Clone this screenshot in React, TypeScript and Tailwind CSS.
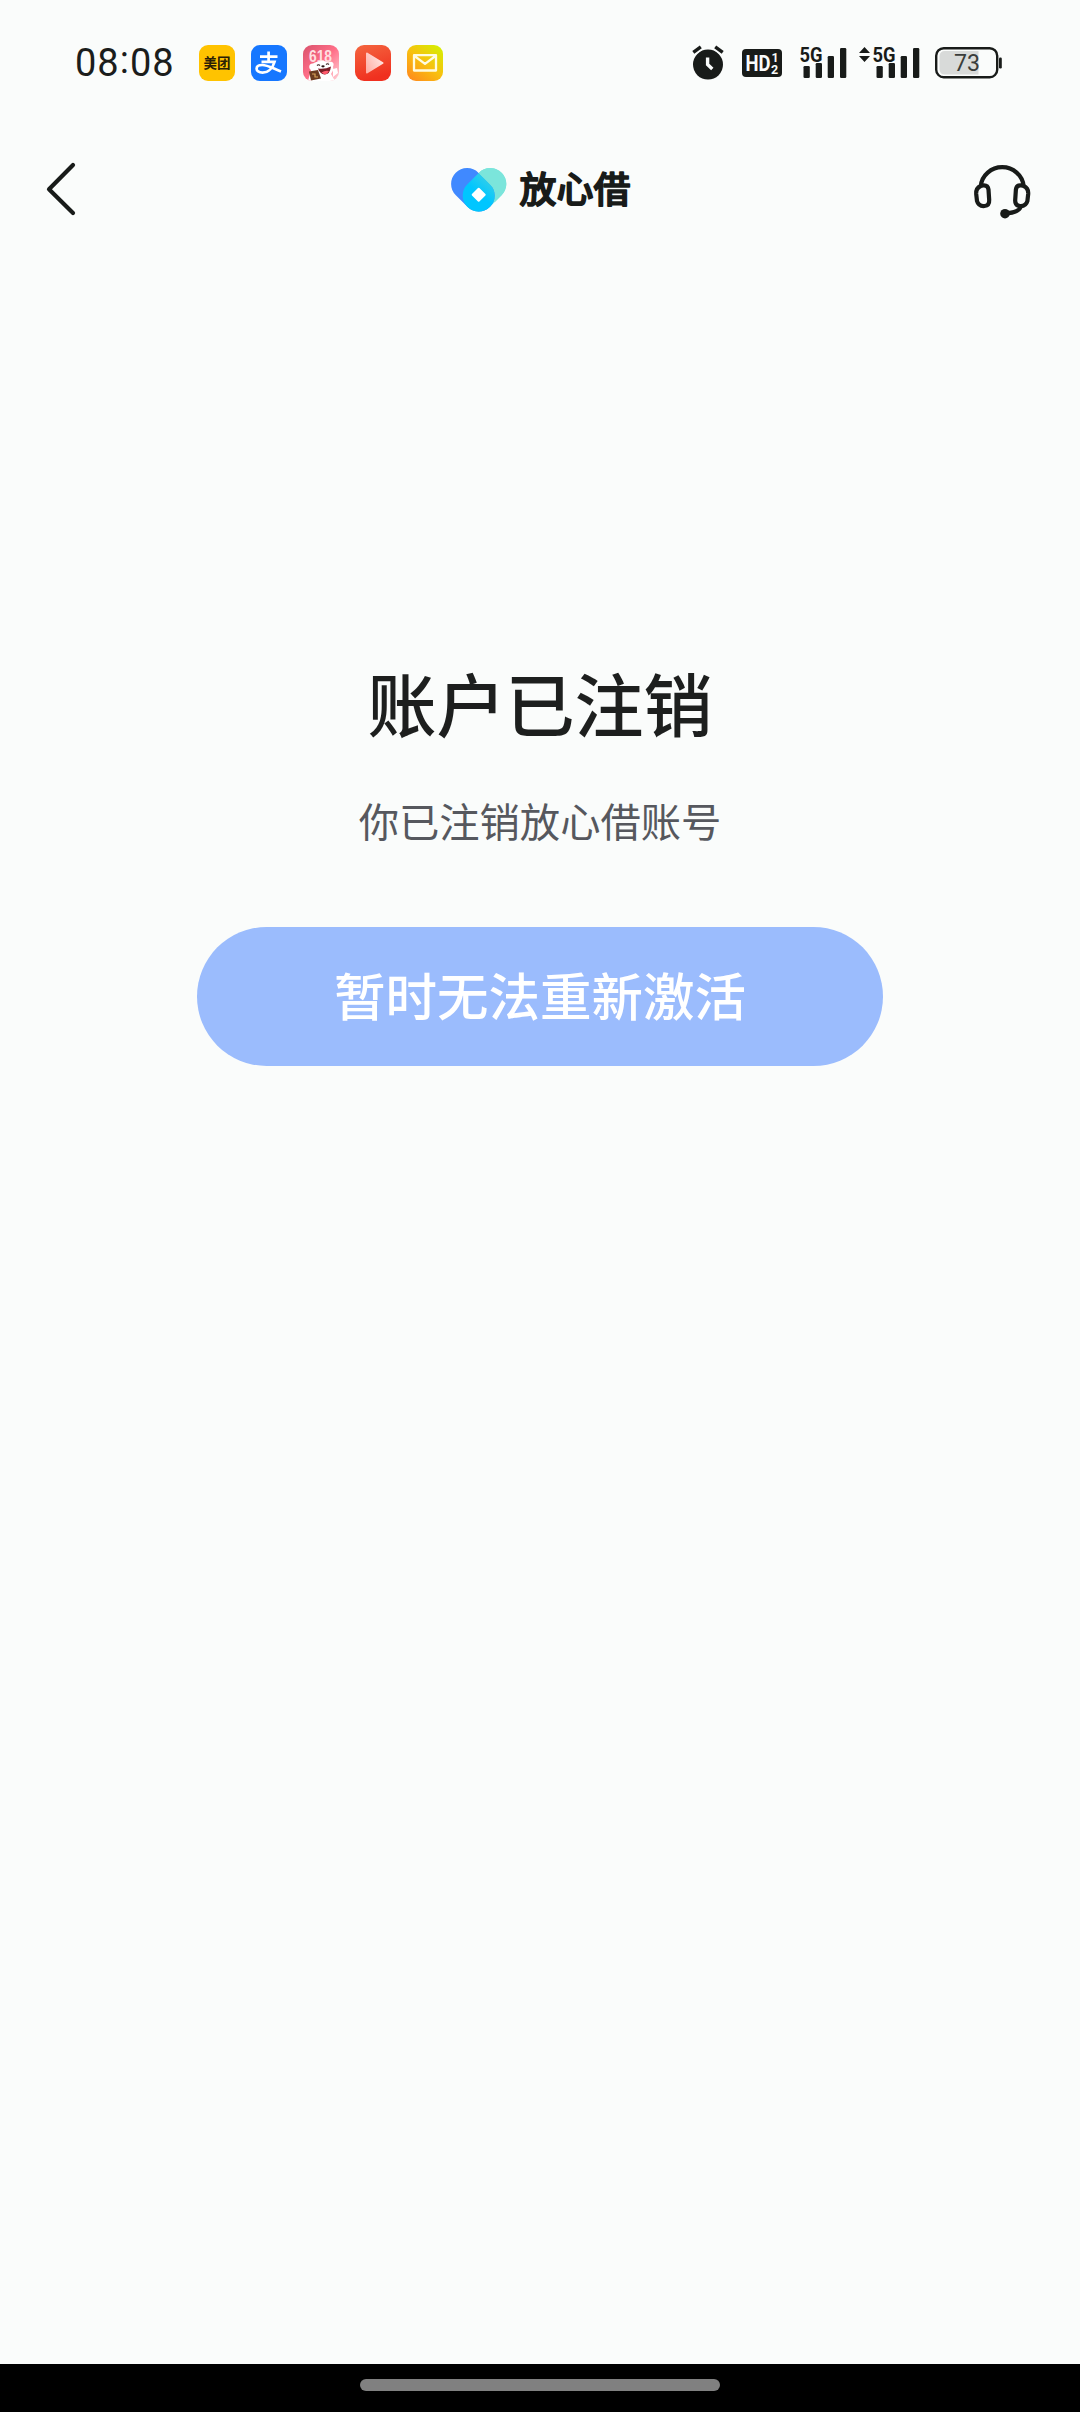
import React from "react";

const CJK = "font-['Noto_Sans_CJK_SC',sans-serif]";

function MeituanIcon() {
  return (
    <div className="flex size-9 items-center justify-center rounded-[9px] bg-[#ffc300]">
      <span className={`${CJK} text-[13.5px] leading-none font-bold text-[#2a2005]`}>美团</span>
    </div>
  );
}

function AlipayIcon() {
  return (
    <svg className="size-9" viewBox="0 0 36 36" fill="none">
      <rect width="36" height="36" rx="9" fill="#1677ff" />
      <path d="M9 11.6H26.5M17.6 6.5V16.5M10.5 16.8H23.5C22 22 18 27.6 11.5 27.6C7.8 27.6 5.6 25.9 5.6 23.7C5.6 21.4 8 20 11.2 20C16.5 20 22 23.5 30 26.5" stroke="#fff" strokeWidth="2.7" />
    </svg>
  );
}

function SaleIcon() {
  return (
    <svg className="size-9" viewBox="0 0 36 36">
      <defs>
        <linearGradient id="sale" x1="0" y1="0" x2="1" y2="1">
          <stop offset="0" stopColor="#d9526c" />
          <stop offset=".5" stopColor="#ff6f88" />
          <stop offset="1" stopColor="#ffd3d8" />
        </linearGradient>
        <clipPath id="saleClip"><rect width="36" height="36" rx="9" /></clipPath>
      </defs>
      <g clipPath="url(#saleClip)">
        <rect width="36" height="36" fill="url(#sale)" />
        <text x="6" y="16.500" textLength="23" lengthAdjust="spacingAndGlyphs" fontFamily="Liberation Sans" fontWeight="700" fontSize="16.500" fill="#ffdfe0">618</text>
        <path d="M5 36L8 25C5 23 6 18 10 18.500C14 16 21 15 25 17.500C29 15.500 32 18 30 22C31 25 29 27 28 29L32 36Z" fill="#fff" />
        <path d="M30 24l4-1 1 5-5 4z" fill="#fff" />
        <path d="M15 23.500Q22 24.500 28 21.500Q27 29.500 21.500 29.500Q17 29 15 23.500Z" fill="#7b1d26" />
        <path d="M18.500 27.500Q22 25 26 26Q24 29.500 21.500 29.500Z" fill="#ff5a6c" />
        <path d="M14 20.500q1.500-1.500 3 0M23 19.500q1.500-1.500 3 0" stroke="#3b1a1a" strokeWidth="1.100" fill="none" />
        <ellipse cx="20" cy="21.300" rx="1.700" ry="1.100" fill="#2b1414" />
        <path d="M6 26.500L15 25L18 33.500L8 35.500Z" fill="#6b3b20" />
        <path d="M9 29h3v3h3" stroke="#d9a55b" strokeWidth="1.200" fill="none" />
      </g>
    </svg>
  );
}

function VideoIcon() {
  return (
    <svg className="size-9" viewBox="0 0 36 36">
      <defs>
        <linearGradient id="video" x1="0" y1="0" x2="0.300" y2="1">
          <stop offset="0" stopColor="#f4663f" />
          <stop offset="1" stopColor="#f0301f" />
        </linearGradient>
        <linearGradient id="tri" x1="0" y1="1" x2="1" y2="0.300">
          <stop offset="0" stopColor="#ffaea4" />
          <stop offset="1" stopColor="#ffe4e0" />
        </linearGradient>
      </defs>
      <rect width="36" height="36" rx="9" fill="url(#video)" />
      <path d="M12 8.500L27.500 18L12 27.500Z" fill="url(#tri)" stroke="url(#tri)" strokeWidth="2" strokeLinejoin="round" />
    </svg>
  );
}

function MailIcon() {
  return (
    <svg className="size-9" viewBox="0 0 36 36" fill="none">
      <defs>
        <linearGradient id="mail" x1="0.100" y1="1" x2="0.900" y2="0">
          <stop offset="0" stopColor="#ff8a1c" />
          <stop offset=".5" stopColor="#f8c010" />
          <stop offset="1" stopColor="#d4f000" />
        </linearGradient>
      </defs>
      <rect width="36" height="36" rx="9" fill="url(#mail)" />
      <path d="M7 10.200H29V25.500H7ZM7.500 11L18 18.800L28.500 11" stroke="#fffbe0" strokeWidth="2.300" strokeLinejoin="round" />
    </svg>
  );
}

function AlarmIcon() {
  return (
    <svg className="h-9 w-8" viewBox="0 0 32 36" fill="none">
      <circle cx="16" cy="19.600" r="15" fill="#181b19" />
      <path d="M1.300 7L8.500 1.800M30.700 7L23.500 1.800" stroke="#fafcfb" strokeWidth="7" />
      <path d="M1.300 7.400L8.800 1.900M30.700 7.400L23.200 1.900" stroke="#181b19" strokeWidth="3.400" />
      <path d="M15.600 12.500V19.500L20.300 24" stroke="#fafcfb" strokeWidth="3.400" />
    </svg>
  );
}

function HdIcon() {
  return (
    <svg className="h-7 w-10" viewBox="0 0 40 28">
      <rect width="40" height="28" rx="4" fill="#181b19" />
      <g fontFamily="Roboto" fontWeight="700" fill="#fafcfb">
        <text x="3.500" y="22" fontSize="22" textLength="25" lengthAdjust="spacingAndGlyphs">HD</text>
        <text x="29.500" y="13" fontSize="12.500">1</text>
        <text x="29" y="25" fontSize="12.500">2</text>
      </g>
    </svg>
  );
}

function SignalIcon() {
  return (
    <svg className="-mt-2 h-10 w-12" viewBox="0 -8 48 40" fill="#181b19">
      <text x="-0.500" y="14.500" fontFamily="Roboto" fontWeight="700" fontSize="20.500" textLength="23" lengthAdjust="spacingAndGlyphs">5G</text>
      <rect x="3.500" y="19" width="6.300" height="12" rx="1.300" />
      <rect x="15.700" y="16" width="6.300" height="15" rx="1.300" />
      <rect x="27.700" y="9" width="6.300" height="22" rx="1.300" />
      <rect x="40" y="1" width="6.300" height="30" rx="1.300" />
    </svg>
  );
}

function BatteryIcon() {
  return (
    <svg className="h-8 w-[68px]" viewBox="0 0 68 32" fill="none">
      <path d="M10 4H43.500V27.500H10Q4.500 27.500 4.500 22V9.500Q4.500 4 10 4Z" fill="#d8dad9" />
      <rect x="1.200" y="1.200" width="61" height="29" rx="7.500" stroke="#181b19" strokeWidth="2.400" />
      <rect x="64" y="10.500" width="2.800" height="11" rx="1.200" fill="#181b19" />
      <text x="19" y="24.300" fontFamily="Roboto" fontSize="24" textLength="26" lengthAdjust="spacingAndGlyphs" fill="#3a3d3b">73</text>
    </svg>
  );
}

function StatusBar() {
  return (
    <div className="flex h-[125px] items-center pl-[75px] pr-[77px]">
      <span className="w-[124px] font-['Roboto',sans-serif] text-[38px] leading-none tracking-[1px] text-[#1b1d1c]">
        08<span className="relative -top-[3px]">:</span>08
      </span>
      <div className="flex gap-4">
        <MeituanIcon />
        <AlipayIcon />
        <SaleIcon />
        <VideoIcon />
        <MailIcon />
      </div>
      <div className="ml-auto flex items-center">
        <AlarmIcon />
        <div className="ml-[18px] flex"><HdIcon /></div>
        <div className="ml-[18px] flex"><SignalIcon /></div>
        <svg className="mr-[3px] ml-[11px] h-8 w-[11px]" viewBox="0 0 11 32" fill="#181b19">
          <path d="M0 6L5.500 0L11 6ZM0 9L5.500 15L11 9Z" />
        </svg>
        <SignalIcon />
        <div className="ml-[14px] flex"><BatteryIcon /></div>
      </div>
    </div>
  );
}

function Logo() {
  return (
    <div className="ml-2 flex items-center gap-[10px]">
      <svg className="h-11 w-14" viewBox="0 0 56 44" fill="none">
        <defs>
          <linearGradient id="drop" x1="0.700" y1="0.150" x2="0.450" y2="0.500">
            <stop offset="0" stopColor="#2ccdec" />
            <stop offset="1" stopColor="#00c6ff" />
          </linearGradient>
        </defs>
        <path d="M39.300 16L27.700 27.500" stroke="#7be5db" strokeWidth="32" strokeLinecap="round" />
        <path d="M16.100 16L27.700 27.500" stroke="#4089ff" strokeWidth="32" strokeLinecap="round" />
        <path d="M27.700 4.900L39 16.200A16 16 0 1 1 16.400 16.200Z" fill="url(#drop)" />
        <path d="M27.700 4.900A16 16 0 0 1 39.300 0A16 16 0 0 1 50.600 27.300L43.500 34.400A16 16 0 0 0 39 16.200Z" fill="#7be5db" />
        <rect x="22.500" y="21.500" width="10.500" height="10.500" rx="1" transform="rotate(45 27.700 26.700)" fill="#fff" />
      </svg>
      <svg className="h-16 w-[116px]" viewBox="-2 -12 116 64">
        <text x="0.500" y="32.800" textLength="111" lengthAdjust="spacingAndGlyphs" fontFamily="Noto Sans CJK SC" fontWeight="500" fontSize="36" fill="#181b19" stroke="#181b19" strokeWidth="1.500" strokeLinejoin="round">放心借</text>
      </svg>
    </div>
  );
}

function Header() {
  return (
    <header className="flex h-[130px] items-center justify-between pr-12 pl-[45px]">
      <svg className="h-14 w-[58px]" viewBox="0 0 58 56" fill="none">
        <path d="M28 3L4 27.300L28 51" stroke="#181b19" strokeWidth="4.200" strokeLinecap="round" strokeLinejoin="round" />
      </svg>
      <Logo />
      <svg className="h-[58px] w-[60px]" viewBox="0 0 60 58" fill="none" stroke="#181b19" strokeWidth="4.200">
        <path d="M8.800 25A21.500 20.800 0 0 1 51.600 25" />
        <path d="M8.800 25L12 24.300Q16 24.300 16.500 28.500L17.200 39Q17.500 44.500 12.500 45Q6.500 45.500 5 40L4.200 33Q3.800 27 8.800 25Z" strokeLinejoin="round" />
        <path d="M51.600 25L48.400 24.300Q44.400 24.300 43.900 28.500L43.200 39Q42.900 44.500 47.900 45Q53.900 45.500 55.400 40L56.200 33Q56.600 27 51.600 25Z" strokeLinejoin="round" />
        <path d="M49 45Q47 52.200 33 52.200" />
        <circle cx="33" cy="52.700" r="4.800" fill="#181b19" stroke="none" />
      </svg>
    </header>
  );
}

export default function App() {
  return (
    <div className={`flex h-[2412px] w-[1080px] flex-col bg-[#fafcfb] ${CJK}`}>
      <StatusBar />
      <Header />
      <main className="flex flex-1 flex-col items-center pt-[397px]">
        <h1 className="text-[69px] leading-[100px] font-medium text-[#1d1f1e]">账户已注销</h1>
        <p className="mt-[38px] text-[40.300px] leading-[60px] text-[#56585e]">你已注销放心借账号</p>
        <button className="mt-[77px] h-[139px] w-[686px] rounded-full bg-[#9bbcfd] pb-[6px] text-[51.500px] leading-none font-medium text-white">
          暂时无法重新激活
        </button>
      </main>
      <div className="flex h-12 justify-center bg-black pt-[15px]">
        <div className="h-3 w-[360px] rounded-full bg-[#808080]" />
      </div>
    </div>
  );
}
